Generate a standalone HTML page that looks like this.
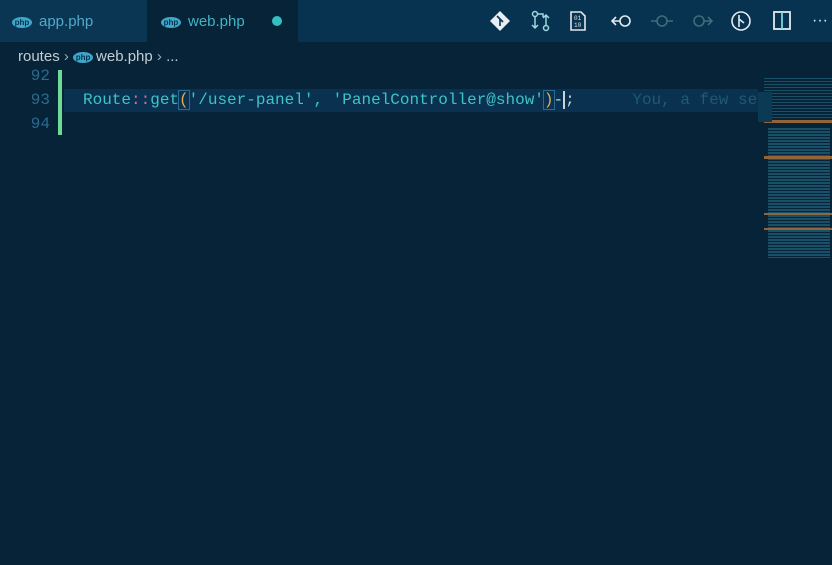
<!DOCTYPE html>
<html><head><style>
html,body{margin:0;width:832px;height:565px;overflow:hidden;background:#072337;font-family:"Liberation Sans",sans-serif}
.tabs{position:absolute;left:0;top:0;width:832px;height:42px;background:#073250}
.tab{position:absolute;top:0;height:42px;line-height:44px;font-size:15px}
.php{display:inline-block;width:20px;height:11px;border-radius:50%;background:#3fa7c9;color:#073250;font-size:8px;line-height:11px;text-align:center;font-weight:bold;vertical-align:1px;margin-right:7px}
.code{position:absolute;font-family:"Liberation Mono",monospace;font-size:16px}
.ln{position:absolute;left:0;width:50px;text-align:right;color:#2a6b93;font-family:"Liberation Mono",monospace;font-size:16px}
.ic{position:absolute;top:10px}
</style></head><body>
<div class="tabs">
 <div class="tab" style="left:0;width:147px;background:#0a3654;color:#52a9c9"><span style="margin-left:12px" class="php">php</span>app.php</div>
 <div class="tab" style="left:147px;width:151px;background:#072337;color:#3fb5c9"><span style="margin-left:14px" class="php">php</span>web.php<span style="position:absolute;left:125px;top:16px;width:10px;height:10px;border-radius:50%;background:#34c0c2"></span></div>
 <svg class="ic" style="left:489px" width="22" height="22" viewBox="0 0 22 22"><path d="M11 1L21 11L11 21L1 11Z" fill="#e8eef2"/><path d="M8 6L14 12M11 9V16M11 9L14 12" stroke="#073250" stroke-width="1.6" fill="none"/></svg>
 <svg class="ic" style="left:530px" width="22" height="22" viewBox="0 0 22 22" fill="none" stroke="#9ed8e0" stroke-width="1.5"><circle cx="5" cy="4" r="2.5"/><circle cx="16" cy="18" r="2.5"/><path d="M5 7V18M2 15L5 18 8 15M16 15V5M13 8L16 5 19 8"/><path d="M8 4h5v3"/></svg>
 <svg class="ic" style="left:569px" width="18" height="22" viewBox="0 0 18 22"><path d="M2 2h10l4 4v14H2Z" fill="none" stroke="#dfe7ea" stroke-width="1.6"/><text x="5" y="10" font-size="6" fill="#dfe7ea" font-family="Liberation Mono">01</text><text x="5" y="17" font-size="6" fill="#dfe7ea" font-family="Liberation Mono">10</text></svg>
 <svg class="ic" style="left:610px" width="24" height="22" viewBox="0 0 24 22" fill="none" stroke="#e3eaee" stroke-width="1.6"><circle cx="15" cy="11" r="5"/><path d="M10 11H2M6 7L2 11 6 15"/></svg>
 <svg class="ic" style="left:650px" width="24" height="22" viewBox="0 0 24 22" fill="none" stroke="#3e6e78" stroke-width="1.6"><circle cx="12" cy="11" r="5"/><path d="M1 11H7M17 11H23"/></svg>
 <svg class="ic" style="left:690px" width="24" height="22" viewBox="0 0 24 22" fill="none" stroke="#3e6e78" stroke-width="1.6"><circle cx="9" cy="11" r="5"/><path d="M14 11H22M18 7L22 11 18 15"/></svg>
 <svg class="ic" style="left:730px" width="22" height="22" viewBox="0 0 22 22" fill="none" stroke="#e3eaee" stroke-width="1.6"><circle cx="11" cy="11" r="9"/><path d="M9 5V17M9 9L14 13"/></svg>
 <svg class="ic" style="left:772px" width="20" height="22" viewBox="0 0 20 22" fill="none" stroke="#e3eaee" stroke-width="1.8"><rect x="2" y="2" width="16" height="17"/><path d="M10 2V19" stroke="#7fd6d8"/></svg>
 <div style="position:absolute;left:812px;top:12px;color:#e3eaee;font-size:16px">···</div>
</div>
<div style="position:absolute;left:18px;top:48px;font-size:15px;color:#c3ccd2">routes <span style="color:#9ab">&#8250;</span> <span class="php" style="margin-right:3px">php</span>web.php <span style="color:#9ab">&#8250;</span> ...</div>
<div style="position:absolute;left:58px;top:70px;width:4px;height:65px;background:#6fd996"></div>
<div style="position:absolute;left:64px;top:89px;width:694px;height:23px;background:#0a3250"></div>
<div class="ln" style="top:67px">92</div>
<div class="ln" style="top:91px">93</div>
<div class="ln" style="top:115px">94</div>
<div class="code" style="left:83px;top:91px;color:#3ec3c6;white-space:pre">Route<span style="color:#e26a8f">::</span>get<span style="color:#e8a94b;outline:1px solid #2a6b93">(</span>'/user-panel', 'PanelController@show'<span style="color:#e8a94b;outline:1px solid #2a6b93">)</span><span style="color:#c9d4d8">-</span><span style="border-left:2px solid #c9d4d8;color:#c9d4d8">;</span>      <span style="color:#1f5a6e">You, a few se</span></div>
<div style="position:absolute;left:758px;top:68px;width:74px;height:190px;opacity:.75;
background:
linear-gradient(#c07a3a,#c07a3a) 6px 52px/68px 3px no-repeat,
linear-gradient(#c07a3a,#c07a3a) 6px 88px/68px 3px no-repeat,
linear-gradient(#c07a3a,#c07a3a) 6px 145px/68px 2px no-repeat,
linear-gradient(#c07a3a,#c07a3a) 6px 160px/68px 2px no-repeat,
linear-gradient(#c07a3a,#c07a3a) 6px 230px/68px 2px no-repeat,
repeating-linear-gradient(#1f6077 0 2px,transparent 2px 3px) 10px 60px/62px 130px no-repeat,
repeating-linear-gradient(#1f6077 0 1px,transparent 1px 3px) 6px 10px/68px 40px no-repeat"></div>
<div style="position:absolute;left:758px;top:92px;width:14px;height:30px;background:#0b3a55"></div>
</body></html>
